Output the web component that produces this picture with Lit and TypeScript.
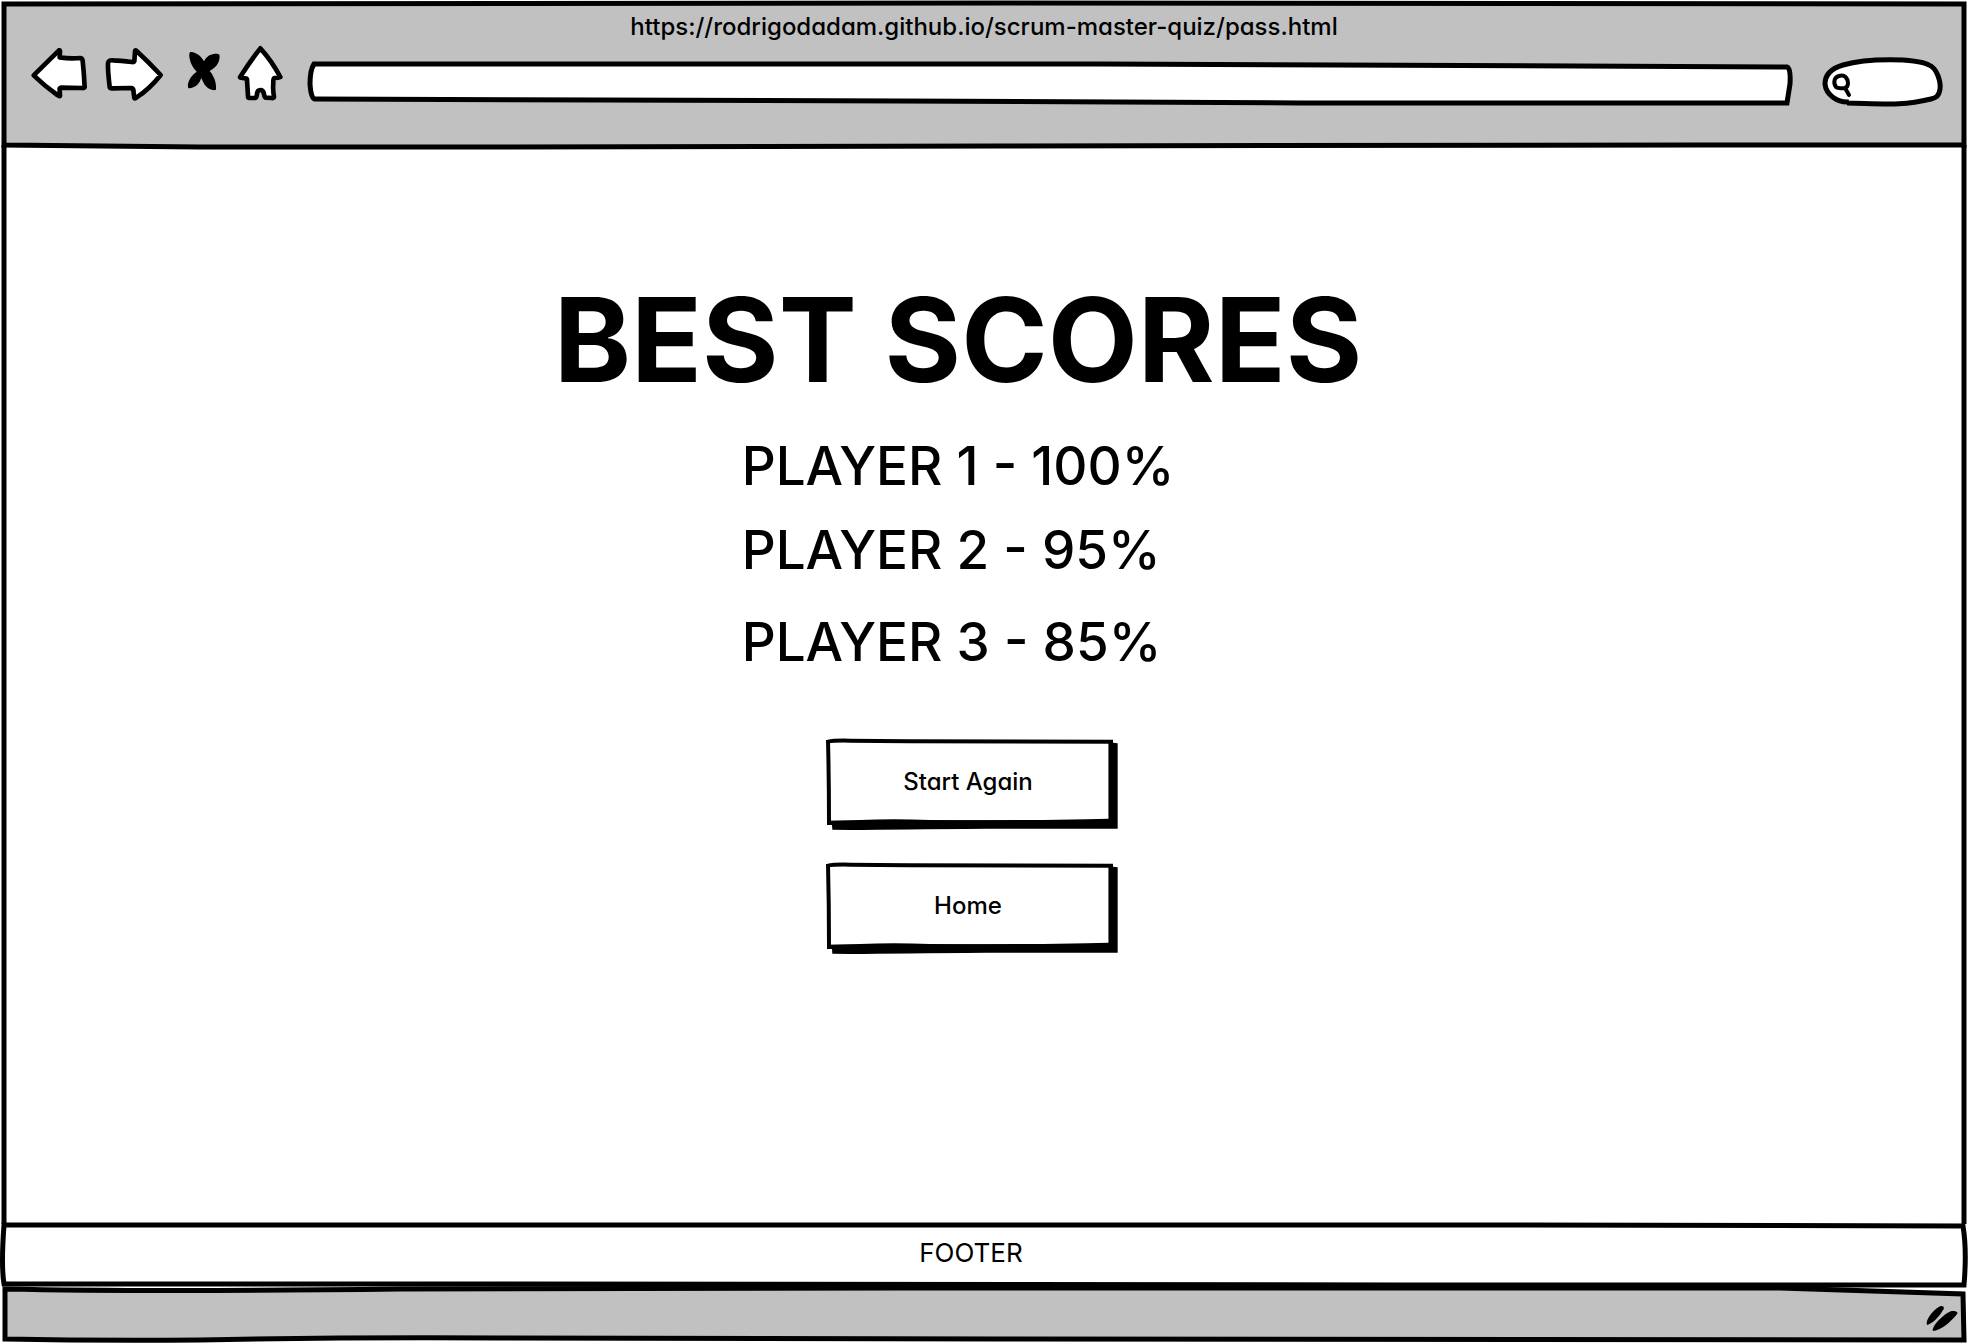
import { LitElement, html, css, svg } from "lit";
import { customElement, property } from "lit/decorators.js";

const backIcon = svg`<path d="M101 226 L177 151 Q180 150 180 155 L179 172 Q210 177 240 174 Q247 174 248 182 Q252 220 254 262 Q253 265 246 264 L182 263 Q178 264 179 270 L180 288 Q177 289 172 285 Q134 258 101 226Z"/>`;
const forwardIcon = svg`<path d="M482 225 Q446 186 409 152 Q405 149 405 155 L403 184 Q402 187 396 186 Q360 182 340 181 Q325 179 324 190 Q323 210 329 261 Q329 266 338 265 L394 264 Q400 265 400 271 L403 294 Q404 297 409 293 Q450 266 482 225Z"/>`;
const closeIcon = svg`<path class="solid" d="M570 157 C574 154 592 160 600 168 Q608 177 612 184 Q618 172 628 166 C640 160 654 160 658 164 C661 176 655 192 646 200 Q638 208 629 213 Q638 222 643 236 C648 248 650 266 647 270 C636 272 622 266 614 254 Q608 244 604 234 Q600 246 592 254 C584 262 570 266 565 264 C561 254 567 238 576 228 Q582 220 590 215 Q580 206 574 192 C568 178 566 162 570 157Z"/>`;
const homeIcon = svg`<path d="M781 145 Q815 182 841 231 Q836 234 823 234 Q819 236 820 250 Q818 270 822 290 Q822 295 815 294 L797 293 Q793 292 792 282 Q790 270 781 270 Q772 270 771 282 Q770 292 766 294 L748 294 Q744 294 744 288 L741 240 Q741 235 736 235 L720 232 Q748 187 781 145Z"/>`;

@customElement("sketch-button")
export class SketchButton extends LitElement {
  @property() label = "";

  static styles = css`
    :host {
      display: block;
    }
    .button {
      display: grid;
      width: 100%;
      padding: 0;
      border: 0;
      background: none;
      color: inherit;
      font: inherit;
      font-feature-settings: inherit;
      cursor: pointer;
    }
    .frame {
      grid-area: 1 / 1;
      width: 100%;
      height: 92px;
      overflow: visible;
    }
    .outline {
      fill: #fff;
      stroke: #000;
      stroke-width: 12;
    }
    .label {
      grid-area: 1 / 1;
      place-self: center;
      padding: 0 6px 4px 0;
    }
  `;

  render() {
    return html`
      <button class="button" type="button">
        <svg class="frame" viewBox="75 54 879 276" preserveAspectRatio="none" aria-hidden="true">
          <path class="outline" d="M84 65 Q100 61 150 62 L325 64 L939 65 M932 65 L932 305 L87 308 Q87 180 84 60" />
          <path d="M81 303 L180 300 Q280 296 390 300 L590 302 Q660 304 730 300 L860 298 L926 296 L926 68 L939 68 L953 70 V326 L560 326 Q300 328 150 330 L97 329 L96 315 H81Z" />
        </svg>
        <span class="label">${this.label}</span>
      </button>
    `;
  }
}

@customElement("app-root")
export class AppRoot extends LitElement {
  private scores = [
    { player: "PLAYER 1", score: "100%" },
    { player: "PLAYER 2", score: "95%" },
    { player: "PLAYER 3", score: "85%" },
  ];

  private tools = [
    { name: "Back", box: "90 135 192 174", wide: true, icon: backIcon },
    { name: "Forward", box: "306 135 192 174", wide: true, icon: forwardIcon },
    { name: "Stop", box: "522 135 156 174", wide: false, icon: closeIcon },
    { name: "Home page", box: "702 135 156 174", wide: false, icon: homeIcon },
  ];

  static styles = css`
    :host {
      display: flex;
      flex-direction: column;
      min-height: 100vh;
      background: #fff;
      color: #000;
      font: 500 24px/32px Inter, "Liberation Sans", sans-serif;
      font-feature-settings: "cv11";
    }
    .part {
      display: grid;
      grid-template-columns: minmax(0, 1fr);
    }
    .part > *,
    .field > * {
      grid-area: 1 / 1;
    }
    .frame {
      width: 100%;
      height: 100%;
      min-height: 0;
      overflow: visible;
      fill: none;
      stroke: #000;
      stroke-width: 5;
    }
    .frame path {
      vector-effect: non-scaling-stroke;
    }
    .chrome {
      fill: #c1c1c1;
    }
    .paper {
      fill: #fff;
    }
    .head {
      height: 148px;
    }
    .bar {
      padding-top: 11px;
    }
    .url {
      margin: 0;
      text-align: center;
    }
    .toolbar {
      display: flex;
      align-items: center;
      gap: 22px;
      padding: 2px 24px 0 30px;
    }
    .tools {
      display: flex;
      gap: 8px;
      margin-bottom: 18px;
    }
    .tool {
      width: 52px;
      height: 58px;
      padding: 0;
      border: 0;
      background: none;
      cursor: pointer;
    }
    .tool.wide {
      width: 64px;
    }
    .icon {
      display: block;
      width: 100%;
      height: 100%;
      fill: #fff;
      stroke: #000;
      stroke-width: 14;
      stroke-linejoin: round;
    }
    .solid {
      fill: #000;
      stroke: none;
    }
    .field {
      display: grid;
      grid-template-columns: minmax(0, 1fr);
      height: 48px;
    }
    .address {
      flex: 1;
    }
    .search {
      flex: 0 0 124px;
      height: 52px;
    }
    .frame .lens {
      stroke-width: 4;
      stroke-linecap: round;
    }
    .input {
      box-sizing: border-box;
      width: 100%;
      padding: 0 12px;
      border: 0;
      outline: 0;
      background: none;
      color: inherit;
      font: inherit;
    }
    .search .input {
      padding-left: 36px;
    }
    .body {
      flex: 1;
    }
    .content {
      display: flex;
      flex-direction: column;
      align-items: center;
      padding: 132px 52px 0 0;
    }
    .title {
      margin: 0 0 36px;
      font-size: 117px;
      line-height: 120px;
      font-weight: 700;
    }
    .scores {
      display: flex;
      flex-direction: column;
      gap: 24px;
      margin: 0;
      padding: 0;
      list-style: none;
      font-size: 53px;
      line-height: 60px;
    }
    .score:last-child {
      margin-top: 8px;
    }
    .actions {
      display: grid;
      gap: 32px;
      width: 293px;
      padding: 66px 0 32px 26px;
    }
    .footer {
      height: 65px;
    }
    .footer-text {
      place-self: center;
      margin: 0;
      padding: 0 26px 4px 0;
      font-size: 26px;
      font-weight: 400;
    }
    .status {
      height: 57px;
    }
    .grip {
      place-self: center end;
      width: 32px;
      height: 28px;
      margin: 6px 10px 0 0;
    }
  `;

  render() {
    return html`
      <header class="part head">
        <svg class="frame" viewBox="0 0 1968 148" preserveAspectRatio="none" aria-hidden="true">
          <path class="chrome" d="M4 4 L1000 3 L1964 4 L1964 145 L1700 145 L1000 146 L500 147 L200 147 L4 145Z" />
        </svg>
        <div class="bar">
          <p class="url">https://rodrigodadam.github.io/scrum-master-quiz/pass.html</p>
          <div class="toolbar">
            <nav class="tools" aria-label="Browser">
              ${this.tools.map(
                (t) => html`<button class="tool ${t.wide ? "wide" : ""}" type="button" aria-label=${t.name}>
                  <svg class="icon" viewBox=${t.box} aria-hidden="true">${t.icon}</svg>
                </button>`
              )}
            </nav>
            <label class="field address">
              <svg class="frame" viewBox="308 59 1490 48" preserveAspectRatio="none" aria-hidden="true">
                <path class="paper" d="M314 64 L700 64 L1100 64 L1787 67 Q1791 68 1790 84 L1787 103 L1300 103 L900 101 L600 100 L315 99 Q311 99 310 84 Q310 70 314 64Z" />
              </svg>
              <input class="input" type="text" aria-label="Address" />
            </label>
            <label class="field search">
              <svg class="frame" viewBox="1820 57 124 52" preserveAspectRatio="none" aria-hidden="true">
                <path class="paper" d="M1849 102 C1838 103 1826 95 1825 84 C1825 74 1833 68 1843 65 C1867 58 1915 58 1929 65 C1937 68 1941 82 1940 89 C1939 97 1935 98 1931 99 C1902 106 1887 104 1847 103" />
                <path class="lens" d="M1846 88 C1841 88 1838 89 1836 87 C1833 83 1834 77 1839 76 C1845 74 1848 79 1848 83 Q1848 87 1845 88 L1849 95" />
              </svg>
              <input class="input" type="search" aria-label="Search" />
            </label>
          </div>
        </div>
      </header>
      <main class="part body">
        <svg class="frame" viewBox="0 0 1968 1074" preserveAspectRatio="none" aria-hidden="true">
          <path d="M4 -3 L4 1076 M1964 -3 L1964 1076" />
        </svg>
        <div class="content">
          <h1 class="title">BEST SCORES</h1>
          <ul class="scores">
            ${this.scores.map((s) => html`<li class="score">${s.player} - ${s.score}</li>`)}
          </ul>
          <div class="actions">
            <sketch-button label="Start Again"></sketch-button>
            <sketch-button label="Home"></sketch-button>
          </div>
        </div>
      </main>
      <footer class="part footer">
        <svg class="frame" viewBox="0 1222 1968 65" preserveAspectRatio="none" aria-hidden="true">
          <path class="paper" d="M4 1225 L1500 1225 L1963 1226 Q1967 1250 1964 1285 L1400 1285 L500 1284 L4 1284 Q1 1266 4 1225Z" />
        </svg>
        <p class="footer-text">FOOTER</p>
      </footer>
      <div class="part status">
        <svg class="frame" viewBox="0 1287 1968 57" preserveAspectRatio="none" aria-hidden="true">
          <path class="chrome" d="M5 1289 Q150 1292 400 1289 L900 1288 L1780 1288 L1963 1294 L1964 1340 L1000 1339 L500 1338 Q350 1337 200 1340 Q100 1341 5 1339Z" />
        </svg>
        <svg class="grip" viewBox="1925 1305 32 28" aria-hidden="true">
          <path d="M1926 1325 C1924 1319 1935 1307 1940 1306 C1944 1306 1943 1309 1942 1310 C1939 1316 1931 1324 1926 1325Z" />
          <path d="M1932 1331 C1930 1326 1945 1312 1951 1311 C1957 1311 1957 1313 1956 1314 C1951 1321 1939 1331 1932 1331Z" />
        </svg>
      </div>
    `;
  }
}
